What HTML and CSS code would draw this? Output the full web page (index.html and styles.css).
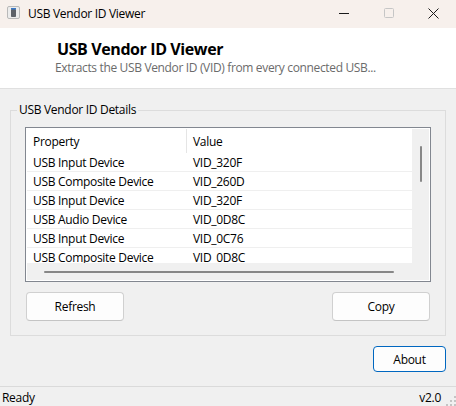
FILE: index.html
```html
<!DOCTYPE html>
<html>
<head>
<meta charset="utf-8">
<title>USB Vendor ID Viewer</title>
<link rel="stylesheet" href="styles.css">
</head>
<body>
<div class="window">
  <div class="titlebar">
    <svg class="app-icon" width="14" height="13" viewBox="0 0 14 13">
      <rect x="0.5" y="0.5" width="12" height="12" rx="1.5" fill="#ececec" stroke="#b9b9b9"/>
      <rect x="4" y="3" width="5" height="8" rx="0.8" fill="#5d6168"/>
      <rect x="4" y="2" width="5" height="1.5" fill="#3a78c8"/>
    </svg>
    <span class="title">USB Vendor ID Viewer</span>
    <div class="controls">
      <span class="ctl"><svg width="10" height="10" viewBox="0 0 10 10"><rect x="0" y="5" width="10" height="1" fill="#1a1a1a"/></svg></span>
      <span class="ctl"><svg width="10" height="10" viewBox="0 0 10 10"><rect x="0.5" y="0.5" width="9" height="9" rx="1" fill="none" stroke="#c6c6c6"/></svg></span>
      <span class="ctl"><svg width="11" height="11" viewBox="0 0 11 11"><path d="M0.5 0.5L10.5 10.5M10.5 0.5L0.5 10.5" stroke="#1a1a1a" stroke-width="1"/></svg></span>
    </div>
  </div>

  <div class="header">
    <div class="h-title">USB Vendor ID Viewer</div>
    <div class="h-sub">Extracts the USB Vendor ID (VID) from every connected USB...</div>
  </div>

  <div class="content">
    <fieldset class="group">
      <legend>USB Vendor ID Details</legend>
      <div class="list">
        <div class="list-main">
          <div class="row head"><span class="c1">Property</span><span class="c2">Value</span></div>
          <div class="row"><span class="c1">USB Input Device</span><span class="c2">VID_320F</span></div>
          <div class="row"><span class="c1">USB Composite Device</span><span class="c2">VID_260D</span></div>
          <div class="row"><span class="c1">USB Input Device</span><span class="c2">VID_320F</span></div>
          <div class="row"><span class="c1">USB Audio Device</span><span class="c2">VID_0D8C</span></div>
          <div class="row"><span class="c1">USB Input Device</span><span class="c2">VID_0C76</span></div>
          <div class="row"><span class="c1">USB Composite Device</span><span class="c2">VID_0D8C</span></div>
        </div>
        <div class="vscroll"><div class="vthumb"></div></div>
        <div class="hscroll"><div class="hthumb"></div></div>
        <div class="corner"></div>
      </div>
      <div class="btn-row">
        <button class="btn">Refresh</button>
        <button class="btn">Copy</button>
      </div>
    </fieldset>
    <div class="about-row">
      <button class="btn about">About</button>
    </div>
  </div>

  <div class="status">
    <span class="st-left">Ready</span>
    <span class="st-right">v2.0</span>
    <svg class="grip" width="12" height="12" viewBox="0 0 12 12">
      <rect x="10" y="2" width="2" height="2" fill="#c4c4c4"/>
      <rect x="6" y="6" width="2" height="2" fill="#c4c4c4"/>
      <rect x="10" y="6" width="2" height="2" fill="#c4c4c4"/>
      <rect x="2" y="10" width="2" height="2" fill="#c4c4c4"/>
      <rect x="6" y="10" width="2" height="2" fill="#c4c4c4"/>
      <rect x="10" y="10" width="2" height="2" fill="#c4c4c4"/>
    </svg>
  </div>
</div>
</body>
</html>
```

FILE: styles.css
```css
html, body {
  margin: 0;
  padding: 0;
}
body {
  width: 456px;
  height: 406px;
  overflow: hidden;
  font-family: "Open Sans", "Noto Sans", sans-serif;
  font-size: 12px;
  letter-spacing: -0.3px;
  color: #000;
  background: #f0f0f0;
}
.window {
  display: flex;
  flex-direction: column;
  height: 406px;
}

/* title bar */
.titlebar {
  flex: none;
  height: 28px;
  background: #f7f0ec;
  display: flex;
  align-items: center;
}
.app-icon {
  flex: none;
  margin-left: 7px;
  margin-top: -3px;
}
.title {
  margin-left: 7px;
  font-size: 12px;
  line-height: 16px;
}
.controls {
  margin-left: auto;
  display: flex;
  height: 100%;
}
.ctl {
  width: 45px;
  display: flex;
  align-items: center;
  justify-content: center;
  margin-top: -2px;
}

/* header */
.header {
  flex: none;
  height: 60px;
  background: #fff;
  border-bottom: 1px solid #e0e0e0;
  padding-left: 57px;
  display: flex;
  flex-direction: column;
}
.h-title {
  margin-top: 11px;
  font-size: 16px;
  font-weight: 700;
  line-height: 20px;
  letter-spacing: -0.4px;
}
.h-sub {
  margin-top: 1px;
  margin-left: -2px;
  font-size: 12px;
  line-height: 16px;
  letter-spacing: -0.35px;
  color: #6b6b6b;
}

/* content */
.content {
  flex: 1;
  display: flex;
  flex-direction: column;
}
.group {
  margin: 13px 10px 0;
  padding: 9px 14px 14px;
  border: 1px solid #dcdcdc;
  min-width: 0;
}
.group legend {
  padding: 0 2px;
  margin-left: -8px;
  font-size: 12px;
  line-height: 16px;
}

.list {
  height: 155px;
  box-sizing: border-box;
  border: 1px solid #828790;
  padding: 1px;
  background: #fff;
  display: grid;
  grid-template-columns: 1fr 17px;
  grid-template-rows: 1fr 17px;
}
.list-main {
  overflow: hidden;
  min-height: 0;
}
.row {
  display: flex;
  align-items: center;
  height: 19px;
  box-sizing: border-box;
  border-bottom: 1px solid #efefef;
  white-space: nowrap;
}
.row.head {
  height: 24px;
  border-bottom: none;
  align-items: stretch;
}
.c1 {
  flex: none;
  width: 160px;
  padding-left: 6px;
  box-sizing: border-box;
}
.c2 {
  padding-left: 6px;
}
.head .c1 {
  border-right: 1px solid #e5e5e5;
  display: flex;
  align-items: center;
}
.head .c2 {
  display: flex;
  align-items: center;
}
.vscroll {
  background: #f0f0f0;
}
.vthumb {
  width: 2px;
  height: 36px;
  margin: 17px 0 0 8px;
  background: #878787;
  border-radius: 1px;
}
.hscroll {
  background: #f0f0f0;
}
.hthumb {
  width: 350px;
  height: 2px;
  margin: 8px 0 0 17px;
  background: #878787;
  border-radius: 1px;
}
.corner {
  background: #f0f0f0;
}

/* buttons */
.btn-row {
  display: flex;
  justify-content: space-between;
  margin-top: 10px;
  padding: 0 1px;
}
.btn {
  width: 98px;
  height: 29px;
  border: 1px solid #d0d0d0;
  border-bottom-color: #c4c4c4;
  border-radius: 4px;
  background: #fdfdfd;
  font: inherit;
  letter-spacing: inherit;
  color: #000;
  padding: 0;
}
.about-row {
  display: flex;
  justify-content: flex-end;
  margin: 10px 10px 0 0;
}
.btn.about {
  width: 73px;
  height: 26px;
  border-color: #0067c0;
}

/* status bar */
.status {
  flex: none;
  height: 20px;
  box-sizing: border-box;
  border-top: 1px solid #dadada;
  display: flex;
  align-items: center;
  padding-left: 2px;
  padding-top: 2px;
}
.st-right {
  margin-left: auto;
}
.grip {
  align-self: flex-end;
  margin-left: 3px;
  margin-bottom: 0;
}
```
